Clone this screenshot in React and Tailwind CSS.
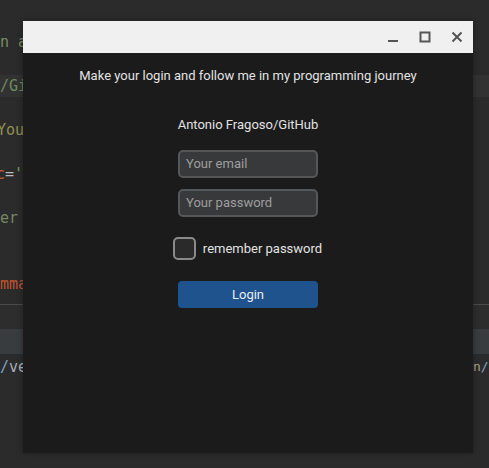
export default function App() {
  const mono = { fontFamily: '"DejaVu Sans Mono", "Liberation Mono", monospace' };
  return (
    <div className="relative w-[489px] h-[468px] overflow-hidden bg-[#2b2b2b]">
      {/* editor background */}
      <div className="pt-[31px] text-[15px] leading-[22px] whitespace-nowrap" style={mono}>
        <div className="h-[22px] text-[#7d8a62]">n and follow me</div>
        <div className="h-[22px]" />
        <div className="h-[22px] bg-[#323232] text-[#6f8a5e]">/GitHub</div>
        <div className="h-[22px]" />
        <div className="h-[22px] text-[#8f9150] -ml-[3px]">Your email</div>
        <div className="h-[22px]" />
        <div className="h-[22px] -ml-[4px]"><span className="text-[#c65a3a]">c</span><span className="text-[#b8bcc0]">=</span><span className="text-[#7d9a5e]">'Your</span></div>
        <div className="h-[22px]" />
        <div className="h-[22px] text-[#7a8666]">er password</div>
        <div className="h-[22px]" />
        <div className="h-[22px]" />
        <div className="h-[22px] text-[#c2532f]">mmary</div>
      </div>
      <div className="mt-[9px] border-t border-[#4b4b4b] h-[25px] bg-[#2d2d2d]" />
      <div className="h-[25px] bg-[#393c3f]" />
      <div className="flex justify-between h-[26px] items-center text-[15px] whitespace-nowrap" style={mono}>
        <span><span className="text-[#7fa0c8]">/</span><span className="text-[#a9b0b8]">venv</span></span>
        <span className="w-[16px] overflow-hidden text-[13px]"><span className="text-[#a9a080]">n</span><span className="text-[#7fa0c8]">/</span></span>
      </div>

      {/* window */}
      <div
        className="absolute left-[23px] top-[21px] w-[450px] h-[432px] bg-[#1b1b1b] flex flex-col shadow-[0_0_6px_rgba(0,0,0,0.35)]"
        style={{ fontFamily: 'Roboto, "Noto Sans", Arial, sans-serif' }}
      >
        <div className="h-[32px] bg-[#f0f0f0] flex items-center justify-end pr-[10px] gap-[20px] shrink-0">
          <svg width="12" height="12" viewBox="0 0 12 12"><rect x="1" y="9" width="10" height="2" fill="#555" /></svg>
          <svg width="12" height="12" viewBox="0 0 12 12"><rect x="1.5" y="1.5" width="9" height="9" fill="none" stroke="#555" strokeWidth="2" /></svg>
          <svg width="12" height="12" viewBox="0 0 12 12"><path d="M1.5 1.5 L10.5 10.5 M10.5 1.5 L1.5 10.5" stroke="#555" strokeWidth="2" /></svg>
        </div>
        <div className="flex flex-col items-center text-[13px] text-[#e2e2e2]">
          <div className="mt-[15px] leading-[16px]">Make your login and follow me in my programming journey</div>
          <div className="mt-[33px] leading-[16px]">Antonio Fragoso/GitHub</div>
          <div className="mt-[17px] w-[140px] h-[28px] rounded-[5px] border-2 border-[#555759] bg-[#38393b] flex items-center pl-[6px] text-[#9e9e9e]">Your email</div>
          <div className="mt-[11px] w-[140px] h-[28px] rounded-[5px] border-2 border-[#555759] bg-[#38393b] flex items-center pl-[6px] text-[#9e9e9e]">Your password</div>
          <div className="mt-[20px] flex items-center gap-[7px] -ml-[1px]">
            <div className="w-[23px] h-[23px] rounded-[5px] border-2 border-[#8a8a8a] bg-[#2a2a2a]" />
            <span className="leading-[16px]">remember password</span>
          </div>
          <div className="mt-[21px] w-[140px] h-[27px] rounded-[4px] bg-[#1f538d] flex items-center justify-center text-[#e8eef5]">Login</div>
        </div>
      </div>
    </div>
  );
}
